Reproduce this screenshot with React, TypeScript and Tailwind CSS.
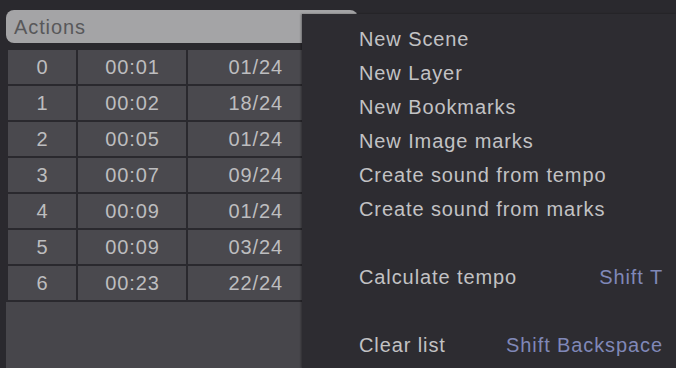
import React from "react";

const rows: [string, string, string][] = [
  ["0", "00:01", "01/24"],
  ["1", "00:02", "18/24"],
  ["2", "00:05", "01/24"],
  ["3", "00:07", "09/24"],
  ["4", "00:09", "01/24"],
  ["5", "00:09", "03/24"],
  ["6", "00:23", "22/24"],
];

type Item = { label?: string; shortcut?: string; sep?: boolean };
const items: Item[] = [
  { label: "New Scene" },
  { label: "New Layer" },
  { label: "New Bookmarks" },
  { label: "New Image marks" },
  { label: "Create sound from tempo" },
  { label: "Create sound from marks" },
  { sep: true },
  { label: "Calculate tempo", shortcut: "Shift T" },
  { sep: true },
  { label: "Clear list", shortcut: "Shift Backspace" },
];

export default function App() {
  return (
    <div
      className="relative w-[676px] h-[368px] overflow-hidden bg-[#2a292e] text-[20px] tracking-[0.9px]"
      style={{ fontFamily: '"Liberation Sans", Arial, sans-serif' }}
    >
      <div className="flex flex-col w-[358px] h-full pl-[6px] pt-[10px]">
        <div className="h-[33px] rounded-[8px] bg-[#a4a4a6] pl-[8px] flex items-center text-[#58585a] leading-none">
          Actions
        </div>
        <div className="mt-[7px] pl-[2px] flex flex-col gap-[2px]">
          {rows.map((r) => (
            <div key={r[0]} className="grid grid-cols-[68px_108px_114px] gap-[2px] h-[34px] text-[#bdbdbf] leading-none">
              <div className="bg-[#4a494e] flex items-center justify-center pl-[1px]">{r[0]}</div>
              <div className="bg-[#4a494e] flex items-center justify-center pl-[1px]">{r[1]}</div>
              <div className="bg-[#4a494e] flex items-center justify-end pr-[19px]">{r[2]}</div>
            </div>
          ))}
        </div>
        <div className="mt-[2px] flex-1 bg-[#47464b]" />
      </div>

      <div className="absolute left-[302px] top-[14px] right-0 bottom-0 bg-[#2d2c31] pt-[8px] shadow-[-1px_0_2px_rgba(0,0,0,0.35)]">
        {items.map((it, i) =>
          it.sep ? (
            <div key={i} className="h-[34px]" />
          ) : (
            <div key={i} className="h-[34px] flex items-center justify-between pl-[57px] pr-[13px] leading-none">
              <span className="text-[#c2c2c4]">{it.label}</span>
              {it.shortcut && <span className="text-[#8088b8]">{it.shortcut}</span>}
            </div>
          )
        )}
      </div>
    </div>
  );
}
